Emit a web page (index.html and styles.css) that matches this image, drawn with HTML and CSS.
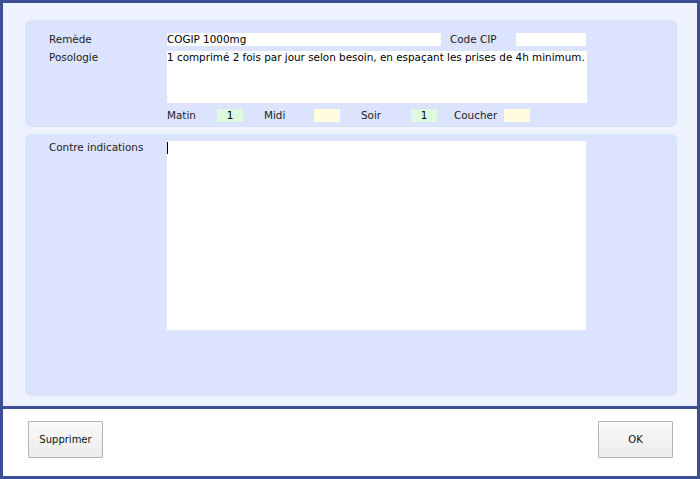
FILE: index.html
```
<!DOCTYPE html>
<html lang="fr">
<head>
    <meta charset="UTF-8">
    <title>Remède</title>
    <link rel="stylesheet" href="styles.css">
</head>
<body>
    <div class="window">
        <div class="form-area">
            <div class="panel panel-top">
                <div class="row">
                    <div class="label">Remède</div>
                    <div class="field name-field">COGIP 1000mg</div>
                    <div class="label cip-label">Code CIP</div>
                    <div class="field cip-field"></div>
                </div>
                <div class="row posologie-row">
                    <div class="label">Posologie</div>
                    <div class="field posologie-field">1 comprimé 2 fois par jour selon besoin, en espaçant les prises de 4h minimum.</div>
                </div>
                <div class="row doses">
                    <div class="dose-label">Matin</div>
                    <div class="dose green">1</div>
                    <div class="dose-label">Midi</div>
                    <div class="dose yellow"></div>
                    <div class="dose-label">Soir</div>
                    <div class="dose green">1</div>
                    <div class="dose-label">Coucher</div>
                    <div class="dose yellow"></div>
                </div>
            </div>
            <div class="panel panel-bottom">
                <div class="row">
                    <div class="label">Contre indications</div>
                    <div class="field contre-field"><span class="caret"></span></div>
                </div>
            </div>
        </div>
        <div class="button-bar">
            <button class="button">Supprimer</button>
            <button class="button">OK</button>
        </div>
    </div>
</body>
</html>
```

FILE: styles.css
```
body {
    margin: 0;
    font-family: "DejaVu Sans", Verdana, sans-serif;
    font-size: 10.4px;
    color: #222;
}
.window {
    width: 700px;
    height: 479px;
    box-sizing: border-box;
    border: 3px solid #3c4f92;
    display: flex;
    flex-direction: column;
}
.form-area {
    height: 406px;
    flex-shrink: 0;
    box-sizing: border-box;
    background-color: #eef2fe;
    border-bottom: 3px solid #3c4f92;
    padding: 17px 20px 0 22px;
}
.panel {
    background-color: #dce3fc;
    border-radius: 6px;
    box-sizing: border-box;
    padding-left: 24px;
}
.panel-top {
    height: 107px;
    padding-top: 13px;
}
.panel-bottom {
    height: 262px;
    margin-top: 7px;
    padding-top: 7px;
}
.row {
    display: flex;
    align-items: flex-start;
}
.label {
    width: 118px;
    line-height: 13px;
    flex-shrink: 0;
}
.field {
    background-color: #fff;
    line-height: 13px;
    height: 13px;
    color: #000;
}
.name-field {
    width: 274px;
}
.cip-label {
    width: 66px;
    margin-left: 9px;
}
.cip-field {
    width: 70px;
}
.posologie-row {
    margin-top: 5px;
}
.posologie-field {
    width: 420px;
    height: 52px;
}
.doses {
    margin-top: 6px;
    padding-left: 118px;
}
.dose-label {
    width: 50px;
    line-height: 13px;
}
.dose {
    width: 26px;
    height: 13px;
    line-height: 13px;
    text-align: center;
    color: #000;
    margin-right: 21px;
}
.dose:nth-of-type(6) {
    margin-right: 17px;
}
.green {
    background-color: #ddfadf;
}
.yellow {
    background-color: #fffce0;
}
.contre-field {
    width: 419px;
    height: 189px;
}
.caret {
    display: block;
    width: 1px;
    height: 12px;
    background-color: #000;
    margin-top: 1px;
}
.button-bar {
    flex: 1;
    background-color: #fff;
    display: flex;
    justify-content: space-between;
    padding: 12px 24px 0 25px;
    align-items: flex-start;
}
.button {
    width: 75px;
    height: 37px;
    font-family: "DejaVu Sans", Verdana, sans-serif;
    font-size: 10px;
    color: #111;
    border: 1px solid #b4b4b4;
    border-radius: 1px;
    background: linear-gradient(#fafafa, #ececec);
    padding: 0;
}
```
